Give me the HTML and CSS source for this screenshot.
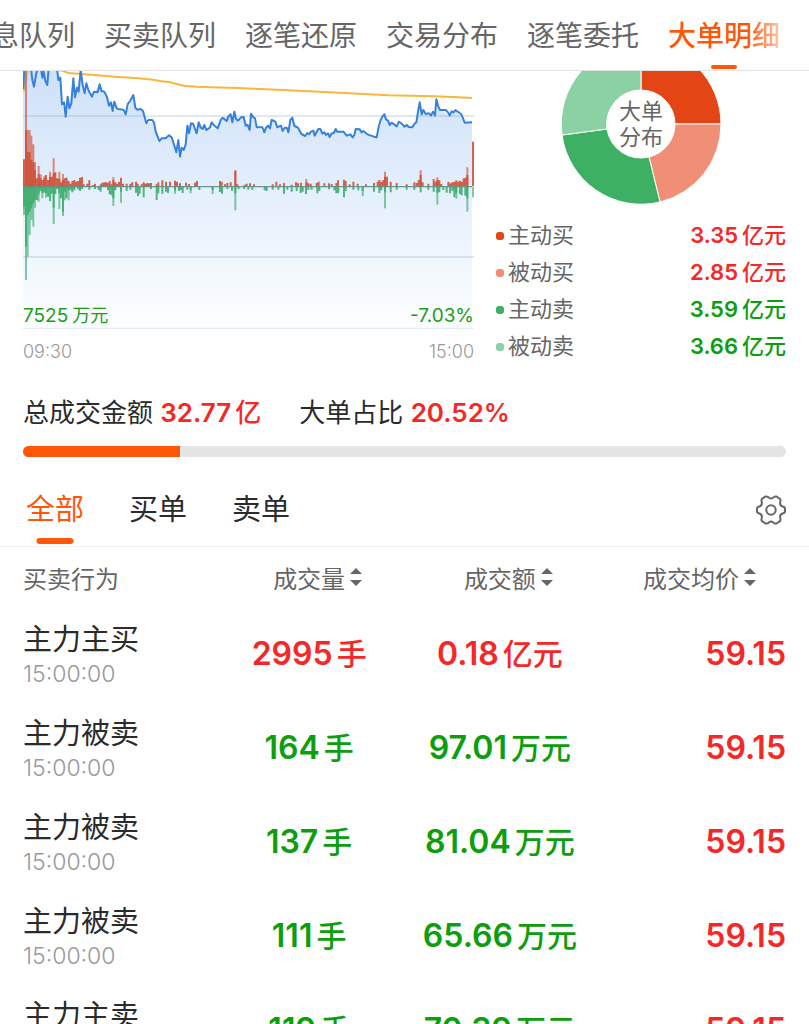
FILE: index.html
```html
<!DOCTYPE html>
<html lang="zh-CN">
<head>
    <meta charset="UTF-8">
    <meta name="viewport" content="width=device-width, initial-scale=1.0">
    <title>大单明细</title>
    <link rel="stylesheet" href="styles.css">
</head>
<body>

<div class="page">
    <!-- Top navigation -->
    <nav class="top-nav">
        <a href="#">消息队列</a>
        <a href="#">买卖队列</a>
        <a href="#">逐笔还原</a>
        <a href="#">交易分布</a>
        <a href="#">逐笔委托</a>
        <a href="#" class="active">大单明细</a>
    </nav>

    <!-- Chart and distribution -->
    <section class="overview">
        <div class="trend">
            <div class="trend-plot">
                <svg viewBox="24 18 1353 774" aria-hidden="true">
                    <defs>
                        <linearGradient id="area_fill" gradientUnits="userSpaceOnUse" x1="0" y1="18" x2="0" y2="792">
                            <stop offset="0" stop-color="#cfe1f8"/>
                            <stop offset="0.5" stop-color="#e6f0fd"/>
                            <stop offset="1" stop-color="#fdfeff"/>
                        </linearGradient>
                    </defs>
                    <path fill="url(#area_fill)" d="M24 792V18H128L136 38 141 118 152 155 163 120 175 40 180 97 197 16 209 85 220 75 231 95 254 58 276 96 293 138 305 130 332 148 355 90 366 134 384 138 394 175 417 172 433 228 462 211 479 245 495 275 512 238 517 182 528 175 545 205 551 172 574 195 608 190 623 158 647 148 652 172 658 140 663 162 686 156 704 195 708 146 725 187 748 202 770 165 803 198 820 202 832 158 849 188 871 213 910 192 944 216 962 192 1013 217 1022 192 1085 217 1108 148 1124 180 1192 187 1204 172 1214 112 1220 148 1260 152 1264 103 1275 135 1304 152 1321 135 1349 173H1371V792Z"/>
                    <g stroke="#7d9bbf" stroke-opacity=".3" stroke-width="4">
                        <path d="M24 153H1377M24 576H1377"/>
                    </g>
                    <path stroke="#e3edf3" stroke-width="4" d="M24 790H1377"/>
                    <path fill="none" stroke="#f9b83c" stroke-width="6" d="M27 80L31 45 40 10M130 15L140 17 160 24 230 29 300 35 370 40 415 44 440 49 465 52 505 62 545 65 665 69 805 75 945 82 1030 86 1120 91 1260 94 1330 97 1371 99"/>
                    <path fill="none" stroke="#3581dd" stroke-width="6" stroke-linejoin="round" d="M25 72L28 10H48L52 45 57 65 63 30 68 10 78 12 82 38 86 20 91 48 97 60 101 10H126L130 45 136 38 141 118 147 112 152 155 158 95 163 130 169 115 175 40 180 97 186 68 191 80 197 16 203 60 209 85 214 55 220 75 231 95 237 80 248 82 254 58 259 78 268 80 276 96 282 122 288 112 293 138 298 110 305 130 312 133 325 134 332 148 338 118 345 108 355 90 361 128 366 134 377 132 384 138 394 175 400 165 411 165 417 172 422 200 433 228 440 220 452 220 462 211 470 217 479 245 484 262 490 225 495 275 500 248 506 255 512 238 517 182 522 205 528 175 534 176 545 205 551 172 557 188 563 192 568 180 574 195 585 188 590 172 596 180 608 190 618 163 623 158 635 168 641 153 647 148 652 172 658 140 663 162 669 167 678 157 686 156 692 182 698 180 704 195 708 146 715 157 720 160 725 187 742 187 748 202 753 188 759 182 765 190 770 165 781 170 787 187 798 182 803 198 810 188 815 188 820 202 826 165 832 158 838 183 849 188 859 207 871 213 877 204 882 208 888 200 895 197 899 212 910 192 916 192 922 206 928 202 933 210 939 205 944 216 950 205 956 205 962 192 966 200 985 200 995 212 1006 208 1013 217 1018 210 1022 192 1034 193 1040 202 1045 198 1057 208 1077 215 1085 217 1090 190 1096 168 1102 155 1108 148 1113 163 1119 167 1124 180 1130 173 1145 184 1152 170 1162 178 1168 185 1175 180 1181 186 1192 187 1198 177 1204 172 1209 140 1214 112 1220 148 1225 135 1232 147 1242 145 1248 152 1254 140 1260 152 1264 103 1270 125 1275 135 1292 135 1299 142 1304 152 1310 139 1316 142 1321 135 1338 147 1344 160 1349 173 1371 172"/>
                    <!-- Buy volume -->
                    <path fill="none" stroke="#cf5138" stroke-opacity=".65" stroke-width="6" d="M33 364V18M38 364V195M44 364V195M49 364V212M55 364V238M60 364V292M71 364V303M77 364V328M88 364V334M105 364V320M116 364V280M133 364V320M144 364V327M295 364V336M661 364V315M874 364V342M1110 364V320M1217 364V316M1267 364V337M1357 364V307"/>
                    <path fill="none" stroke="#cf5138" stroke-opacity=".9" stroke-width="6" d="M27 364V283M33 364V195M38 364V260M44 364V262M49 364V285M55 364V292M60 364V315M66 364V340M71 364V328M77 364V340M82 364V345M88 364V340M93 364V330M99 364V345M105 364V335M110 364V335M116 364V325M121 364V322M127 364V340M133 364V342M138 364V352M144 364V345M150 364V340M155 364V338M161 364V348M167 364V356M172 364V348M178 364V345M184 364V350M189 364V348M195 364V338M201 364V336M206 364V358M217 364V356M223 364V346M234 364V360M240 364V356M257 364V358M262 364V353M268 364V352M274 364V352M279 364V354M284 364V348M290 364V358M295 364V345M301 364V352M307 364V356M312 364V350M318 364V338M324 364V356M335 364V356M346 364V356M352 364V352M363 364V350M368 364V356M380 364V358M386 364V352M392 364V356M397 364V354M403 364V355M408 364V354M425 364V358M430 364V352M442 364V346M453 364V350M465 364V350M480 364V347M486 364V350M495 364V355M513 364V353M522 364V357M540 364V353M546 364V348M615 364V348M620 364V350M630 364V358M637 364V354M647 364V352M661 364V318M667 364V358M689 364V359M695 364V356M705 364V355M717 364V358M773 364V358M784 364V350M795 364V358M807 364V354M830 364V359M843 364V352M849 364V355M858 364V353M874 364V352M880 364V355M887 364V356M905 364V354M911 364V350M928 364V355M942 364V355M950 364V357M964 364V354M969 364V346M987 364V344M992 364V348M1004 364V358M1015 364V350M1028 364V356M1053 364V358M1077 364V354M1088 364V350M1093 364V345M1099 364V350M1105 364V345M1110 364V335M1116 364V335M1127 364V350M1145 364V354M1175 364V358M1198 364V352M1205 364V354M1211 364V345M1217 364V330M1223 364V352M1240 364V356M1256 364V342M1262 364V350M1267 364V345M1273 364V346M1279 364V357M1300 364V350M1306 364V355M1312 364V352M1318 364V350M1324 364V346M1330 364V350M1335 364V347M1340 364V350M1346 364V340M1351 364V338M1357 364V330M1374 364V230"/>
                    <!-- Sell volume -->
                    <path fill="none" stroke="#3eae6e" stroke-opacity=".65" stroke-width="6" d="M27 366V450M33 366V645M38 366V575M44 366V510M49 366V465M55 366V485M60 366V428M71 366V410M82 366V400M93 366V398M116 366V477M133 366V432M144 366V453M150 366V406M161 366V406M295 366V423M318 366V413M480 366V386M527 366V385M593 366V387M661 366V436M1043 366V394M1110 366V430M1267 366V419M1324 366V401M1357 366V440M1374 366V397"/>
                    <path fill="none" stroke="#3eae6e" stroke-opacity=".9" stroke-width="6" d="M27 366V425M33 366V545M38 366V450M44 366V440M49 366V430M55 366V415M60 366V405M66 366V405M71 366V388M77 366V378M82 366V383M88 366V383M93 366V383M99 366V395M105 366V408M110 366V386M116 366V428M121 366V388M127 366V372M133 366V385M138 366V400M144 366V440M150 366V380M155 366V400M161 366V376M167 366V376M172 366V382M178 366V376M189 366V373M195 366V378M201 366V372M223 366V374M240 366V372M251 366V375M257 366V380M279 366V376M284 366V388M290 366V391M295 366V400M301 366V376M318 366V380M335 366V378M346 366V374M363 366V383M369 366V393M374 366V386M386 366V397M408 366V372M425 366V405M430 366V385M442 366V386M453 366V380M459 366V384M480 366V376M492 366V378M498 366V375M503 366V384M517 366V374M527 366V376M553 366V375M593 366V375M615 366V381M621 366V386M637 366V372M651 366V377M661 366V385M671 366V372M687 366V372M700 366V374M712 366V374M749 366V376M755 366V378M773 366V374M790 366V374M807 366V386M817 366V374M830 366V380M845 366V378M857 366V384M863 366V380M873 366V387M880 366V375M890 366V374M907 366V385M913 366V378M942 366V373M958 366V376M964 366V385M970 366V384M987 366V397M992 366V378M1015 366V374M1030 366V376M1043 366V378M1077 366V380M1093 366V384M1099 366V376M1110 366V382M1127 366V382M1145 366V374M1175 366V374M1198 366V374M1217 366V382M1240 366V374M1256 366V380M1267 366V384M1273 366V382M1285 366V375M1295 366V383M1305 366V385M1312 366V378M1318 366V397M1324 366V385M1335 366V387M1340 366V391M1351 366V392M1357 366V400"/>
                    <path stroke="#4f7f74" stroke-opacity=".8" stroke-width="4" d="M24 365H1371"/>
                </svg>
                <div class="trend-values">
                    <span>7525<span class="unit">万元</span></span>
                    <span>-7.03%</span>
                </div>
            </div>
            <div class="trend-axis">
                <span>09:30</span>
                <span>15:00</span>
            </div>
        </div>

        <div class="distribution">
            <svg class="donut" viewBox="-80 -53 160 134" role="img" aria-label="大单分布">
                <g stroke="#fff">
                    <path fill="#e34614" d="M0 -80A80 80 0 0 1 80 0H34A34 34 0 0 0 0 -34Z"/>
                    <path fill="#f08e76" d="M80 0A80 80 0 0 1 19 78L8 33A34 34 0 0 0 34 0Z"/>
                    <path fill="#3eb063" d="M19 78A80 80 0 0 1 -79 11L-34 5A34 34 0 0 0 8 33Z"/>
                    <path fill="#8cd1a3" d="M-79 11A80 80 0 0 1 0 -80V-34A34 34 0 0 0 -34 5Z"/>
                </g>
                <text class="donut-label" x="0" y="-5">大单</text>
                <text class="donut-label" x="0" y="21">分布</text>
            </svg>
            <ul class="legend">
                <li class="up"><i class="dot active-buy"></i><span class="label">主动买</span><strong>3.35<span class="unit">亿元</span></strong></li>
                <li class="up"><i class="dot passive-buy"></i><span class="label">被动买</span><strong>2.85<span class="unit">亿元</span></strong></li>
                <li class="down"><i class="dot active-sell"></i><span class="label">主动卖</span><strong>3.59<span class="unit">亿元</span></strong></li>
                <li class="down"><i class="dot passive-sell"></i><span class="label">被动卖</span><strong>3.66<span class="unit">亿元</span></strong></li>
            </ul>
        </div>
    </section>

    <!-- Totals -->
    <section class="totals">
        <div class="totals-text">
            <p>总成交金额 <strong>32.77<span class="unit">亿</span></strong></p>
            <p>大单占比 <strong>20.52%</strong></p>
        </div>
        <div class="ratio">
            <div class="ratio-fill" style="width: 20.52%"></div>
        </div>
    </section>

    <!-- Filter -->
    <div class="filter">
        <button type="button" class="active">全部</button>
        <button type="button">买单</button>
        <button type="button">卖单</button>
        <button type="button" class="settings" aria-label="设置">
            <svg viewBox="0 0 30 30" fill="none" stroke="#666" stroke-width="2" stroke-linejoin="round">
                <path d="M9.500 1.500Q11.500 1 13 2.700Q15 4.400 17 2.700Q18.500 1 20.500 1.500L24 3.800Q25 5 24.200 7Q23.600 10.500 26.500 11.500Q29 12 29 13.500V16.500Q29 18 26.500 18.500Q23.600 19.500 24.200 23Q25 25 24 26.200L20.500 28.500Q18.500 29 17 27.300Q15 25.600 13 27.300Q11.500 29 9.500 28.500L6 26.200Q5 25 5.800 23Q6.400 19.500 3.500 18.500Q1 18 1 16.500V13.500Q1 12 3.500 11.500Q6.400 10.500 5.800 7Q5 5 6 3.800Z"/>
                <circle cx="15" cy="15" r="4.700"/>
            </svg>
        </button>
    </div>

    <!-- Deals -->
    <table class="deals">
        <thead>
            <tr>
                <th>买卖行为</th>
                <th><button type="button">成交量<svg viewBox="0 0 12 20"><path d="M0 7L6 1 12 7ZM0 13H12L6 19Z"/></svg></button></th>
                <th><button type="button">成交额<svg viewBox="0 0 12 20"><path d="M0 7L6 1 12 7ZM0 13H12L6 19Z"/></svg></button></th>
                <th><button type="button">成交均价<svg viewBox="0 0 12 20"><path d="M0 7L6 1 12 7ZM0 13H12L6 19Z"/></svg></button></th>
            </tr>
        </thead>
        <tbody>
            <tr class="up">
                <td><div class="name">主力主买</div><time>15:00:00</time></td>
                <td>2995<span class="unit">手</span></td>
                <td>0.18<span class="unit">亿元</span></td>
                <td class="price">59.15</td>
            </tr>
            <tr class="down">
                <td><div class="name">主力被卖</div><time>15:00:00</time></td>
                <td>164<span class="unit">手</span></td>
                <td>97.01<span class="unit">万元</span></td>
                <td class="price">59.15</td>
            </tr>
            <tr class="down">
                <td><div class="name">主力被卖</div><time>15:00:00</time></td>
                <td>137<span class="unit">手</span></td>
                <td>81.04<span class="unit">万元</span></td>
                <td class="price">59.15</td>
            </tr>
            <tr class="down">
                <td><div class="name">主力被卖</div><time>15:00:00</time></td>
                <td>111<span class="unit">手</span></td>
                <td>65.66<span class="unit">万元</span></td>
                <td class="price">59.15</td>
            </tr>
            <tr class="down">
                <td><div class="name">主力主卖</div><time>15:00:00</time></td>
                <td>119<span class="unit">手</span></td>
                <td>70.39<span class="unit">万元</span></td>
                <td class="price">59.15</td>
            </tr>
        </tbody>
    </table>
</div>

</body>
</html>
```

FILE: styles.css
```css
* {
    box-sizing: border-box;
}
body {
    margin: 0;
    background-color: #fff;
    color: #2b2b2b;
    font-family: Inter, "Noto Sans CJK SC", sans-serif;
}
.page {
    height: 100vh;
    overflow: hidden;
}
button {
    padding: 0;
    border: 0;
    background: none;
    color: inherit;
    font: inherit;
    cursor: pointer;
}
svg {
    display: block;
}
p, ul {
    margin: 0;
    padding: 0;
}
strong {
    font-weight: 600;
}
.unit {
    margin-left: 4px;
    font-weight: 500;
}

/* Top navigation */
.top-nav {
    display: flex;
    justify-content: flex-end;
    gap: 29px;
    height: 71px;
    padding-right: 29px;
    border-bottom: 1px solid #e2e2e2;
    overflow: hidden;
}
.top-nav a {
    flex: none;
    position: relative;
    color: #666;
    font-size: 28px;
    line-height: 72px;
    text-decoration: none;
}
.top-nav .active {
    background: linear-gradient(90deg, #ff560a 70%, #ffc9ac);
    background-clip: text;
    color: transparent;
    font-weight: 500;
}
.top-nav .active::after,
.filter .active::after {
    content: "";
    position: absolute;
    left: 50%;
    bottom: 1px;
    width: 26px;
    height: 4px;
    border-radius: 2px;
    background-color: #ff560a;
    transform: translateX(-50%);
}

/* Chart and distribution */
.overview {
    display: grid;
    grid-template-columns: 14fr 9fr;
    gap: 22px;
    padding: 0 23px;
}
.trend-plot {
    position: relative;
}
.trend-values, .trend-axis {
    display: flex;
    justify-content: space-between;
    font-size: 18px;
    line-height: 26px;
}
.trend-values {
    position: absolute;
    left: 0;
    right: 0;
    bottom: 0;
    color: #1a9e1a;
    font-size: 19px;
}
.trend-values .unit {
    font-size: 18px;
    font-weight: 400;
}
.trend-axis {
    padding-top: 10px;
    color: #999;
    font-weight: 300;
}
.donut {
    width: 160px;
    margin: 0 auto 12px;
}
.donut-label {
    fill: #666;
    font-size: 22px;
    text-anchor: middle;
}
.legend {
    list-style: none;
    font-size: 22px;
    line-height: 37px;
}
.legend li {
    display: flex;
    align-items: center;
    gap: 4px;
}
.legend .label {
    color: #666;
}
.legend strong {
    margin-left: auto;
}
.dot {
    width: 8px;
    height: 8px;
    border-radius: 3px;
}
.active-buy {
    background-color: #e34614;
}
.passive-buy {
    background-color: #f08e76;
}
.active-sell {
    background-color: #3eb063;
}
.passive-sell {
    background-color: #8cd1a3;
}
.up, .price, .totals strong {
    color: #f52727;
}
.down {
    color: #0c9e0c;
}

/* Totals */
.totals {
    padding: 29px 23px 0;
}
.totals-text {
    display: flex;
    gap: 38px;
    font-size: 26px;
    line-height: 38px;
}
.ratio {
    height: 11px;
    margin-top: 14px;
    border-radius: 6px;
    background-color: #e5e5e5;
    overflow: hidden;
}
.ratio-fill {
    height: 100%;
    background-color: #ff560a;
}

/* Filter */
.filter {
    display: flex;
    gap: 45px;
    height: 90px;
    padding: 17px 23px 0 26px;
    border-bottom: 1px solid #eee;
    font-size: 29px;
    line-height: 72px;
}
.filter button {
    position: relative;
}
.filter .active {
    color: #ff560a;
}
.filter .active::after {
    bottom: 2px;
    width: 37px;
    height: 6px;
    border-radius: 3px;
}
.filter .settings {
    width: 30px;
    margin-left: auto;
}

/* Deals */
.deals {
    width: 100%;
    padding: 0 23px;
    border-spacing: 0;
    table-layout: fixed;
}
.deals th {
    height: 60px;
    padding: 0;
    color: #666;
    font-size: 24px;
    font-weight: 400;
}
.deals th:first-child,
.deals td:first-child {
    text-align: left;
}
.deals th button {
    display: inline-flex;
    align-items: center;
    gap: 5px;
    padding-left: 17px;
}
.deals th:last-child {
    padding-right: 30px;
    text-align: right;
}
.deals th svg {
    width: 12px;
    height: 20px;
    fill: #666;
}
.deals td {
    height: 94px;
    padding: 0;
    font-size: 32px;
    font-weight: 600;
    line-height: 38px;
    text-align: center;
}
.deals .unit {
    font-size: 30px;
}
.deals .price {
    text-align: right;
}
.deals .name {
    padding-top: 3px;
    color: #2b2b2b;
    font-size: 29px;
    font-weight: 400;
    line-height: 36px;
}
time {
    display: block;
    color: #999;
    font-size: 23px;
    font-weight: 300;
    line-height: 32px;
}
```
